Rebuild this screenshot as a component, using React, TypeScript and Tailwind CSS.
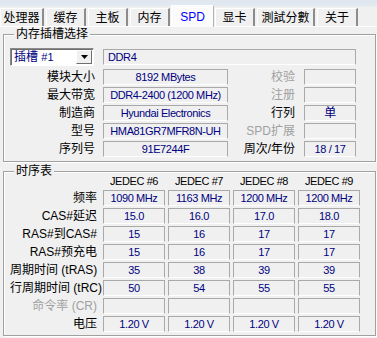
const font = "font-['Liberation_Sans','Noto_Sans_CJK_SC',sans-serif]";

const tabs = [
  { label: "处理器", cls: "w-[44px]" },
  { label: "缓存", cls: "w-[40px] ml-[2px]" },
  { label: "主板", cls: "w-[40px] ml-[2px]" },
  { label: "内存", cls: "w-[40px] ml-[2px]" },
  { label: "SPD", cls: "w-[43px] ml-[1px]", active: true },
  { label: "显卡", cls: "w-[40px] ml-[1px]" },
  { label: "測試分數", cls: "w-[58px] ml-[2px]" },
  { label: "关于", cls: "w-[41px] ml-[2px]" },
];

const moduleRows = [
  { label: "模块大小", value: "8192 MBytes", rLabel: "校验", rValue: "", rOff: true },
  { label: "最大带宽", value: "DDR4-2400 (1200 MHz)", rLabel: "注册", rValue: "", rOff: true },
  { label: "制造商", value: "Hyundai Electronics", rLabel: "行列", rValue: "单", rOff: false },
  { label: "型号", value: "HMA81GR7MFR8N-UH", rLabel: "SPD扩展", rValue: "", rOff: true },
  { label: "序列号", value: "91E7244F", rLabel: "周次/年份", rValue: "18 / 17", rOff: false },
];

const timingRows = [
  { label: "频率", values: ["1090 MHz", "1163 MHz", "1200 MHz", "1200 MHz"] },
  { label: "CAS#延迟", values: ["15.0", "16.0", "17.0", "18.0"] },
  { label: "RAS#到CAS#", values: ["15", "16", "17", "17"] },
  { label: "RAS#预充电", values: ["15", "16", "17", "17"] },
  { label: "周期时间 (tRAS)", values: ["35", "38", "39", "39"] },
  { label: "行周期时间 (tRC)", values: ["50", "54", "55", "55"] },
  { label: "命令率 (CR)", values: ["", "", "", ""], off: true },
  { label: "电压", values: ["1.20 V", "1.20 V", "1.20 V", "1.20 V"] },
];

const jedec = ["JEDEC #6", "JEDEC #7", "JEDEC #8", "JEDEC #9"];

function Field({ children, className = "" }: { children?: React.ReactNode; className?: string }) {
  return (
    <div
      className={`h-[16px] flex items-center justify-center border border-[#a9a9a9] border-b-white text-[11px] tracking-[-0.4px] text-[#000080] whitespace-nowrap overflow-hidden ${className}`}
    >
      {children}
    </div>
  );
}

function GroupBox({ title, className = "", children }: { title: string; className?: string; children: React.ReactNode }) {
  return (
    <fieldset
      className={`border border-[#a0a0a0] shadow-[inset_1px_1px_0_#fff,1px_1px_0_#fff] ${className}`}
    >
      <legend className="ml-[4px] px-[2px] leading-[14px] text-[12px] text-black bg-[#f0f0f0]">{title}</legend>
      {children}
    </fieldset>
  );
}

export default function App() {
  return (
    <div className={`w-[377px] h-[338px] bg-[#f0f0f0] overflow-hidden ${font}`}>
      {/* Tabs */}
      <div className="h-[27px] flex items-end border-b border-white bg-[linear-gradient(#dfe6ef_0,#e4e9f0_6px,#f0f0f0_7px)]">
        {tabs.map((t) =>
          t.active ? (
            <div
              key={t.label}
              className={`relative z-10 -mb-px h-[22px] flex items-center justify-center bg-[#fbfbfb] border-t border-l border-white border-r border-r-[#b4b4b4] text-[12px] text-[#0000ff] ${t.cls}`}
            >
              {t.label}
            </div>
          ) : (
            <div
              key={t.label}
              className={`h-[18px] flex items-center justify-center border-t border-l border-white border-r-2 border-r-[#8c8c8c] text-[12px] text-black ${t.cls}`}
            >
              {t.label}
            </div>
          )
        )}
      </div>

      <div className="pl-[3px] pr-[1px]">
        {/* Memory slot selection */}
        <GroupBox title="内存插槽选择" className="pl-[6px] pb-[4px]">
          <div className="flex items-center mt-[7px]">
            <div className="w-[84px] h-[18px] flex items-center bg-white border border-[#8a8a8a] border-b-white border-r-white shadow-[inset_1px_1px_0_#6e6e6e]">
              <span className="flex-1 pl-[3px] text-[12px] text-[#000080] whitespace-nowrap">
                插槽 <span className="text-[11px]">#1</span>
              </span>
              <div className="w-[16px] h-[14px] mr-[1px] flex items-center justify-center bg-[#f0f0f0] border border-white border-r-[#6e6e6e] border-b-[#6e6e6e]">
                <svg width="7" height="4" viewBox="0 0 7 4">
                  <path d="M0 0h7L3.5 4z" fill="#000" />
                </svg>
              </div>
            </div>
            <Field className="ml-[9px] w-[253px] !justify-start pl-[4px]">DDR4</Field>
          </div>

          <div className="flex flex-col gap-[2px] mt-[3px]">
            {moduleRows.map((r) => (
              <div key={r.label} className="flex items-center h-[16px]">
                <div className="w-[85px] text-right text-[12px] text-black leading-[16px]">{r.label}</div>
                <Field className="ml-[8px] w-[125px]">{r.value}</Field>
                <div
                  className={`w-[67px] text-right text-[12px] leading-[16px] ${r.rOff ? "text-[#a0a0a0]" : "text-black"}`}
                >
                  {r.rLabel}
                </div>
                <Field className="ml-[9px] w-[52px]">
                  {r.rValue === "单" ? <span className="text-[12px]">{r.rValue}</span> : r.rValue}
                </Field>
              </div>
            ))}
          </div>
        </GroupBox>

        {/* Timing table */}
        <GroupBox title="时序表" className="mt-[2px] pl-[6px] pb-[3px]">
          <div className="flex items-center h-[14px] -mt-[4px]">
            <div className="w-[87px]" />
            <div className="ml-[6px] flex gap-[3px]">
              {jedec.map((j) => (
                <div key={j} className="w-[62px] text-center text-[11px] tracking-[-0.4px] text-black whitespace-nowrap">
                  {j}
                </div>
              ))}
            </div>
          </div>
          <div className="flex flex-col gap-[2px] mt-[2px]">
            {timingRows.map((r) => (
              <div key={r.label} className="flex items-center h-[16px]">
                <div
                  className={`w-[87px] text-right text-[12px] leading-[16px] whitespace-nowrap ${r.off ? "text-[#a0a0a0]" : "text-black"}`}
                >
                  {r.label}
                </div>
                <div className="ml-[6px] flex gap-[3px]">
                  {r.values.map((v, i) => (
                    <Field key={i} className="w-[62px]">
                      {v}
                    </Field>
                  ))}
                </div>
              </div>
            ))}
          </div>
        </GroupBox>
      </div>
    </div>
  );
}
